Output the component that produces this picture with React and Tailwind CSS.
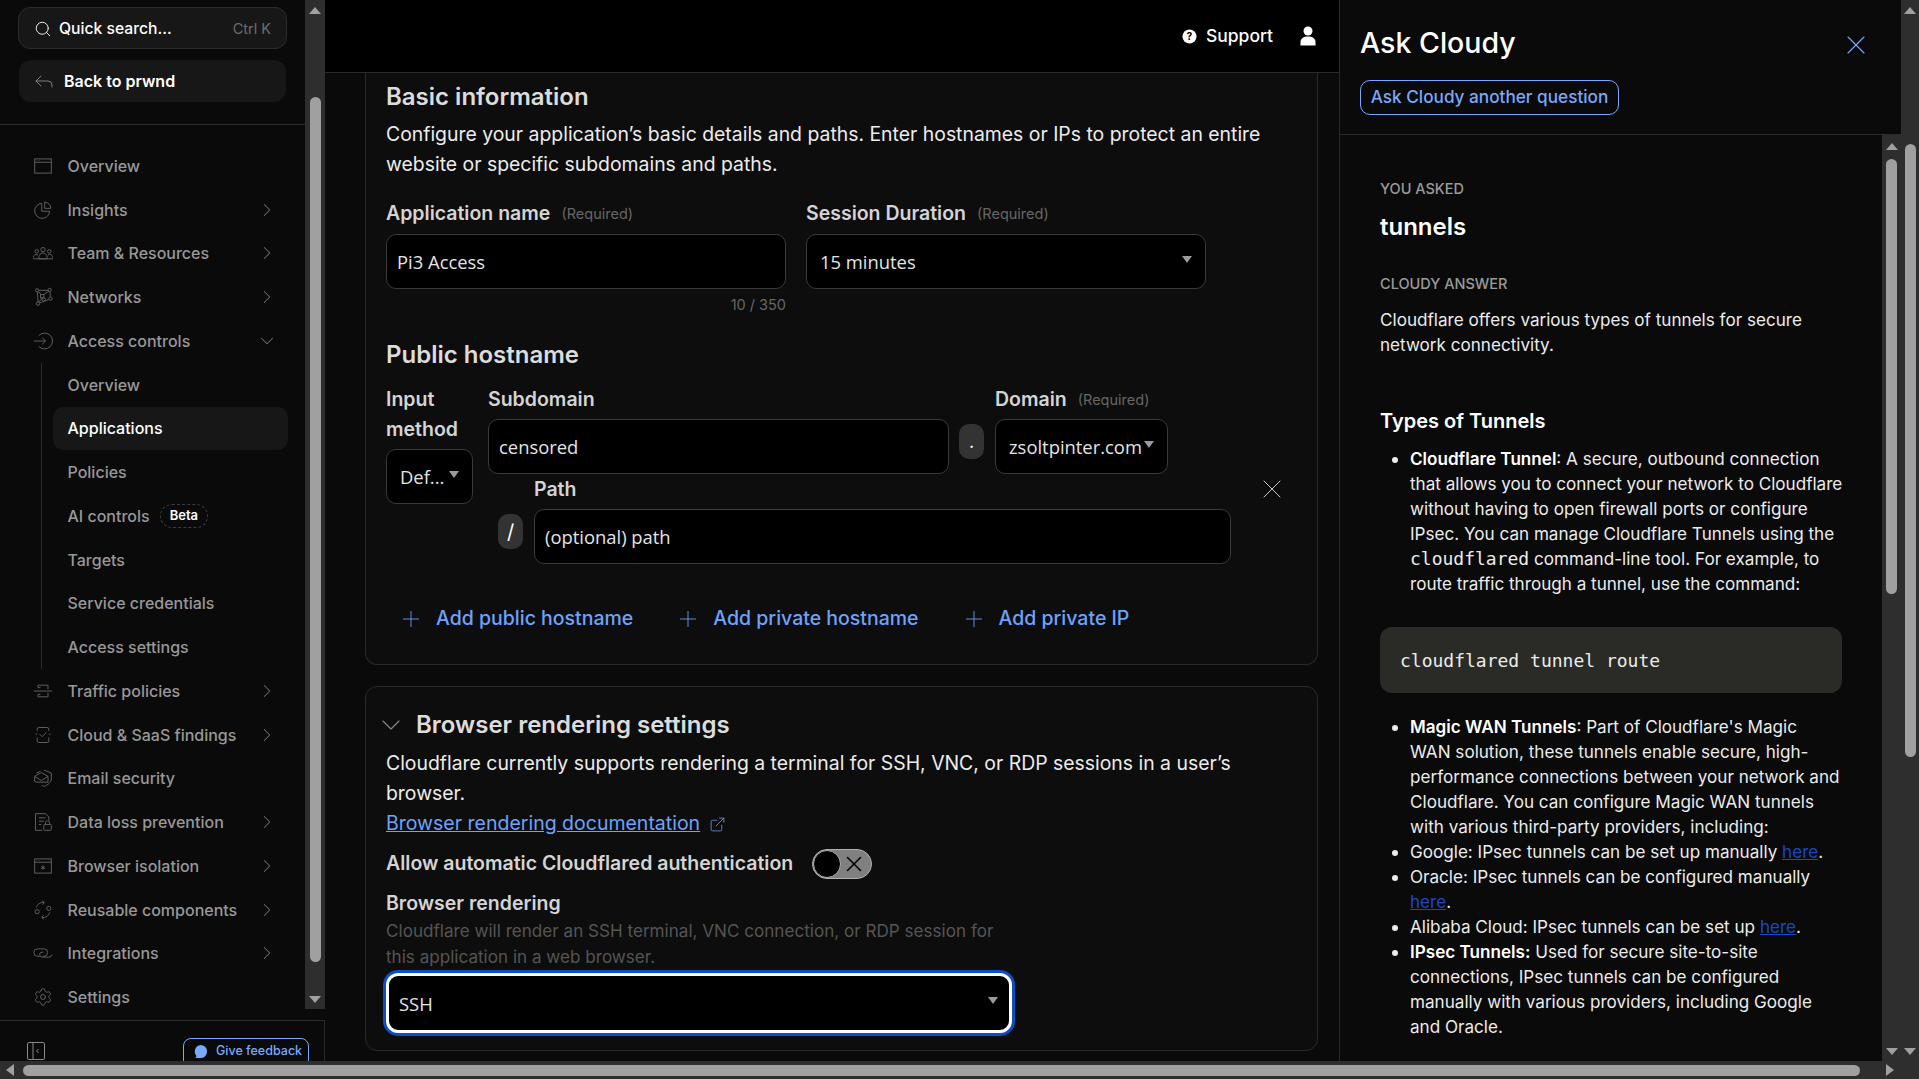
import React from "react";
import { ChevronDown, ChevronRight, Plus, Search, X, Settings, Reply, ExternalLink } from "lucide-react";

const Icon = ({ children }) => (
  <svg width="20" height="20" viewBox="0 0 24 24" fill="none" stroke="currentColor" strokeWidth="1.2" className="shrink-0">
    {children}
  </svg>
);

const icons = {
  overview: <Icon><rect x="2" y="3.5" width="20" height="17" /><path d="M2 7.5h20M4 5.5h.5M6 5.5h.5M8 5.5h.5" /></Icon>,
  insights: <Icon><path d="M10.5 4a9 9 0 1 0 9.5 9.5h-9.5z" /><path d="M14 2.5a8 8 0 0 1 7.5 7.5H14z" /></Icon>,
  team: <Icon><circle cx="12" cy="8" r="2.6" /><circle cx="4.5" cy="10" r="2.1" /><circle cx="19.5" cy="10" r="2.1" /><path d="M7 19v-2a5 5 0 0 1 10 0v2zM0 19v-1.5a4 4 0 0 1 6-3.2M24 19v-1.5a4 4 0 0 0-6-3.2M0 19h24" /></Icon>,
  networks: <Icon><circle cx="5" cy="4" r="2" /><circle cx="20" cy="3.5" r="2" /><circle cx="21" cy="14" r="2" /><circle cx="6" cy="20" r="2" /><circle cx="13" cy="15" r="2" /><rect x="9" y="9" width="4" height="4" /><path d="M7 4h11M5.3 6 6 18M8 19l11-4M20.3 5.5l.5 6.5M6.5 5.5l3 3.5M19 5l-6 4M11.5 13l-5 5.5" /></Icon>,
  access: <Icon><path d="M1 12h14M11 8l4 4-4 4M7 5.5a9.5 9.5 0 1 1 0 13" /></Icon>,
  traffic: <Icon><path d="M6 8V5h12v5M1 12h22M6 16v3h12v-5M6 8h3M6 16h3" /></Icon>,
  cloud: <Icon><path d="M5 7V5a2 2 0 0 1 2-2h10a2 2 0 0 1 2 2v2M5 15v4a2 2 0 0 0 2 2h10a2 2 0 0 0 2-2v-4M3 11h2M19 11h2M8 11l3 3 5-5" /></Icon>,
  email: <Icon><path d="M13 2.5 22 6v7c0 4-4 7.500-9 9l-2.500-1M4 6l5-2" /><path d="m2 10 8-4.500 8 4.500v7H4l-2-1zM2 10l8 5 8-5" /></Icon>,
  dlp: <Icon><path d="M11 22H3V2h12l4 4v4M7 7h8M7 11h6M7 15h3" /><rect x="13" y="15" width="9" height="7" rx="1" /><path d="M15 15v-2a2.500 2.500 0 0 1 5 0v2" /></Icon>,
  browser: <Icon><rect x="2" y="3.500" width="20" height="17" /><path d="M2 7.500h20M4 5.500h.5M6 5.500h.5M8 5.500h.5M12 11.500v5M9.800 12.800l4.400 2.400M14.200 12.800l-4.400 2.400" /></Icon>,
  reusable: <Icon><circle cx="5" cy="14" r="2.500" /><circle cx="19" cy="10" r="2.500" /><path d="M4 9a8 8 0 0 1 9-6M11 1l2.500 2-2 2.500M20 15a8 8 0 0 1-9 6M13 23l-2.500-2 2-2.500" /></Icon>,
  integrations: <Icon><path d="M8 16H5.500a4.500 4.500 0 0 1 0-9H13a4.500 4.500 0 0 1 0 9h-1.500" /><path d="M12.500 11H11a3 3 0 0 0 0 6h8a4 4 0 0 0 4-3" /></Icon>,
  settings: <Settings size={20} strokeWidth={1.2} className="shrink-0" />,
};

const NavItem = ({ icon, label, chevron, open }) => (
  <div className="flex h-[43.75px] items-center text-[16px] font-medium text-[#989898]">
    <div className="flex w-[67.5px] justify-end pr-[14.5px] text-[#5e5e5e]">{icons[icon]}</div>
    <span className="flex-1">{label}</span>
    {chevron && (
      <span className="pr-[27px] text-[#707070]">
        {open ? <ChevronDown size={22} strokeWidth={1.1} /> : <ChevronRight size={22} strokeWidth={1.1} />}
      </span>
    )}
  </div>
);

const SubItem = ({ children, active }) => (
  <div className={`mr-[17px] flex h-[43.75px] items-center gap-[10px] rounded-[10px] pl-[14.5px] text-[16px] font-medium ${active ? "bg-[#171717] text-white" : "text-[#989898]"}`}>
    {children}
  </div>
);

const ScrollArrow = ({ dir }) => {
  const cls = {
    up: "border-x-[6px] border-b-[7px] border-x-transparent border-b-[#a0a0a0]",
    down: "border-x-[6px] border-t-[7px] border-x-transparent border-t-[#a0a0a0]",
    left: "border-y-[6px] border-r-[8px] border-y-transparent border-r-[#a0a0a0]",
    right: "border-y-[6px] border-l-[8px] border-y-transparent border-l-[#a0a0a0]",
  };
  return <div className={`h-0 w-0 ${cls[dir]}`} />;
};

const Caret = () => <div className="h-0 w-0 border-x-[5px] border-t-[7px] border-x-transparent border-t-[#9a9a9a]" />;

const Label = ({ children, required, className = "" }) => (
  <div className={`flex items-center gap-[11px] pt-[2px] text-[19.5px] font-semibold text-[#d4d4d4] ${className}`}>
    {children}
    {required && <span className="text-[14.5px] font-normal text-[#666]">(Required)</span>}
  </div>
);

const Field = ({ children, className = "" }) => (
  <div className={`flex h-[55px] items-center rounded-[10px] border border-[#3a3a3a] bg-black pt-[1px] text-[18.4px] text-[#e4e4e4] [font-family:'Open_Sans',sans-serif] ${className}`}>
    {children}
  </div>
);

const AddLink = ({ children }) => (
  <div className="flex items-center gap-[12px] text-[19.5px] font-medium text-[#6ea2fb]">
    <Plus size={26} strokeWidth={0.8} />
    {children}
  </div>
);

const Here = () => <a className="text-[#1a47c8] underline">here</a>;

const Code = ({ children }) => <code className="text-[18px] [font-family:'DejaVu_Sans_Mono',monospace]">{children}</code>;

export default function App() {
  return (
    <div className="flex h-[1079px] flex-col overflow-hidden bg-[#0a0a0a] text-white [font-family:Inter,sans-serif]">
      <div className="flex h-[1061px] min-h-0">
        {/* sidebar */}
        <aside className="flex w-[325px] shrink-0 flex-col">
          <div className="flex h-[1009px]">
            <div className="w-[305px]">
              <div className="mt-[7px] ml-[18px] flex h-[42px] w-[269px] items-center rounded-[12px] border border-[#2c2c2c] bg-[#171717] pt-[1px] pr-[15px] pl-[14.5px] text-[15.7px] font-medium">
                <Search size={18} strokeWidth={1.2} className="mr-[7.5px]" />
                <span className="flex-1">Quick search...</span>
                <span className="text-[14.5px] font-normal text-[#6d6d6d]">Ctrl K</span>
              </div>
              <div className="mt-[11px] ml-[19px] flex h-[42px] w-[267px] items-center rounded-[12px] bg-[#171717] pl-[13px] text-[16px] font-semibold">
                <Reply size={24} strokeWidth={0.9} className="mr-[8px] text-[#8a8a8a]" />
                Back to prwnd
              </div>
              <div className="mt-[22px] border-t border-[#2a2a2a]" />
              <nav className="mt-[19px]">
                <NavItem icon="overview" label="Overview" />
                <NavItem icon="insights" label="Insights" chevron />
                <NavItem icon="team" label="Team & Resources" chevron />
                <NavItem icon="networks" label="Networks" chevron />
                <NavItem icon="access" label="Access controls" chevron open />
                <div className="ml-[41px] border-l border-[#2c2c2c] pl-[11px]">
                  <SubItem>Overview</SubItem>
                  <SubItem active>Applications</SubItem>
                  <SubItem>Policies</SubItem>
                  <SubItem>
                    AI controls
                    <span className="rounded-full border border-dashed border-[#3c3c3c] px-[9px] py-[1px] text-[13px] font-semibold text-white">Beta</span>
                  </SubItem>
                  <SubItem>Targets</SubItem>
                  <SubItem>Service credentials</SubItem>
                  <SubItem>Access settings</SubItem>
                </div>
                <NavItem icon="traffic" label="Traffic policies" chevron />
                <NavItem icon="cloud" label="Cloud & SaaS findings" chevron />
                <NavItem icon="email" label="Email security" />
                <NavItem icon="dlp" label="Data loss prevention" chevron />
                <NavItem icon="browser" label="Browser isolation" chevron />
                <NavItem icon="reusable" label="Reusable components" chevron />
                <NavItem icon="integrations" label="Integrations" chevron />
                <NavItem icon="settings" label="Settings" />
              </nav>
            </div>
            {/* sidebar scrollbar */}
            <div className="flex w-[20px] flex-col items-center bg-[#2e2e2e] pt-[7px] pb-[6px]">
              <ScrollArrow dir="up" />
              <div className="mt-[83px] h-[865px] w-[11px] rounded-full bg-[#a0a0a0]" />
              <div className="flex-1" />
              <ScrollArrow dir="down" />
            </div>
          </div>
          <div className="mt-[11px] flex flex-1 items-start justify-between border-t border-r border-[#2a2a2a] pt-[17px] pr-[15px] pl-[27px]">
            <svg width="18" height="18" viewBox="0 0 18 18" fill="none" stroke="#8a8a8a" className="mt-[4px]">
              <rect x="0.5" y="0.5" width="17" height="17" rx="1.5" />
              <path d="M6 1v16M11.5 7 9.500 9l2 2" />
            </svg>
            <div className="flex h-[30px] w-[126px] items-center gap-[8px] rounded-[8px] border border-[#78a9ff] pb-[4px] pl-[9px] text-[12.5px] font-medium text-[#78a9ff]">
              <svg width="15" height="15" viewBox="0 0 16 16" fill="#78a9ff"><path d="M8 1a7 7 0 0 1 0 14H2.500l1.300-2.300A7 7 0 0 1 8 1z" /></svg>
              Give feedback
            </div>
          </div>
        </aside>

        {/* main column */}
        <main className="flex w-[1014px] shrink-0 flex-col bg-[#0a0a0a]">
          <header className="flex h-[73px] shrink-0 items-center justify-end gap-[10px] border-b border-[#2a2a2a] bg-black pr-[23px] text-[17.5px] font-medium">
            <svg width="15" height="15" viewBox="0 0 16 16" className="mr-[-1px]">
              <circle cx="8" cy="8" r="7.5" fill="#fff" />
              <text x="8" y="12" textAnchor="middle" fontSize="11" fontWeight="700" fill="#000">?</text>
            </svg>
            <span className="mr-[17px]">Support</span>
            <svg width="16" height="20" viewBox="0 0 16 20" fill="#fff">
              <circle cx="8" cy="5" r="4.5" />
              <path d="M0.500 19.500v-3.500c0-3.500 3-5.500 7.500-5.500s7.500 2 7.500 5.500v3.500z" />
            </svg>
          </header>
          <div className="flex-1 overflow-hidden pr-[21px] pl-[40px]">
            <section className="rounded-b-[12px] border-x border-b border-[#2a2a2a] bg-[#0d0d0d] px-[20px] pt-[8px] pb-[30px]">
              <h2 className="text-[24px] leading-[32px] font-semibold text-[#dcdcdc]">Basic information</h2>
              <p className="mt-[6px] text-[19.4px] leading-[30px] text-[#ececec]">
                Configure your application’s basic details and paths. Enter hostnames or IPs to protect an entire website or specific subdomains and paths.
              </p>
              <div className="mt-[22px] flex gap-[20px]">
                <div className="w-[400px]">
                  <Label required className="h-[24px]">Application name</Label>
                  <Field className="mt-[9px] pl-[10px]">Pi3 Access</Field>
                  <div className="mt-[6px] text-right text-[14.5px] leading-[20px] text-[#666]">10 / 350</div>
                </div>
                <div className="w-[400px]">
                  <Label required className="h-[24px]">Session Duration</Label>
                  <Field className="mt-[9px] justify-between pr-[13px] pl-[13px]">
                    15 minutes
                    <span className="mb-[6px]"><Caret /></span>
                  </Field>
                </div>
              </div>
              <h2 className="mt-[24px] text-[24px] leading-[32px] font-semibold text-[#dcdcdc]">Public hostname</h2>
              <div className="mt-[13px] flex">
                <div className="w-[87px]">
                  <div className="text-[19.5px] leading-[30px] font-semibold text-[#d4d4d4]">Input method</div>
                  <Field className="mt-[5px] gap-[5px] pl-[13px]">
                    Def...
                    <span className="mb-[6px]"><Caret /></span>
                  </Field>
                </div>
                <div className="ml-[15px] flex-1">
                  <div className="flex">
                    <div className="w-[461px]">
                      <Label className="h-[30px]">Subdomain</Label>
                      <Field className="mt-[5px] pl-[10px]">censored</Field>
                    </div>
                    <div className="mt-[40px] ml-[10px] flex h-[35px] w-[25px] items-center justify-center rounded-[10px] bg-[#333] text-[18px]">.</div>
                    <div className="ml-[11px] w-[173px]">
                      <Label required className="h-[30px]">Domain</Label>
                      <Field className="mt-[5px] gap-[2px] pl-[13px]">
                        zsoltpinter.com
                        <span className="mb-[6px]"><Caret /></span>
                      </Field>
                    </div>
                  </div>
                  <div className="flex">
                    <div className="mt-[40px] ml-[10px] flex h-[35px] w-[25px] items-center justify-center rounded-[10px] bg-[#333] text-[20px]">/</div>
                    <div className="ml-[11px] w-[697px]">
                      <Label className="h-[30px]">Path</Label>
                      <Field className="mt-[5px] pl-[10px] text-[#999]">(optional) path</Field>
                    </div>
                    <X size={32} strokeWidth={0.7} className="-mt-px ml-[25px] text-[#d8d8d8]" />
                  </div>
                </div>
              </div>
              <div className="mt-[40px] flex h-[30px] items-center gap-[42px] pl-[12px]">
                <AddLink>Add public hostname</AddLink>
                <AddLink>Add private hostname</AddLink>
                <AddLink>Add private IP</AddLink>
              </div>
            </section>

            <section className="mt-[21px] rounded-[12px] border border-[#2a2a2a] bg-[#0d0d0d] px-[20px] pt-[20px] pb-[17px]">
              <div className="-ml-[11px] flex h-[36px] items-center gap-[9px]">
                <ChevronDown size={32} strokeWidth={0.8} className="text-[#8a8a8a]" />
                <h2 className="text-[24px] font-semibold text-[#dcdcdc]">Browser rendering settings</h2>
              </div>
              <p className="mt-[5px] text-[19.4px] leading-[30px] text-[#ececec]">
                Cloudflare currently supports rendering a terminal for SSH, VNC, or RDP sessions in a user’s browser.
              </p>
              <div className="mt-[1px] flex h-[30px] items-center gap-[9px] text-[19.5px] text-[#6ea2fb]">
                <a className="underline">Browser rendering documentation</a>
                <ExternalLink size={17} strokeWidth={1.1} />
              </div>
              <div className="mt-[10px] flex h-[30px] items-center gap-[19px] text-[19.5px] font-semibold text-[#d4d4d4]">
                Allow automatic Cloudflared authentication
                <div className="flex h-[30px] w-[60px] items-center rounded-full border border-[#b0b0b0] bg-[#808080]">
                  <div className="h-[28px] w-[28px] rounded-full border border-[#b0b0b0] bg-black" />
                  <X size={26} strokeWidth={1.4} className="text-black" />
                </div>
              </div>
              <Label className="mt-[12px] h-[24px]">Browser rendering</Label>
              <p className="mt-[3px] w-[640px] text-[17.1px] leading-[26px] text-[#555]">
                Cloudflare will render an SSH terminal, VNC connection, or RDP session for this application in a web browser.
              </p>
              <div className="mt-[3px] flex h-[60px] w-[626px] items-center justify-between rounded-[12px] border-[3px] border-white bg-black pt-[1px] pr-[11px] pl-[10px] text-[18.4px] text-[#e4e4e4] ring-[3px] ring-[#0b4fc4] [font-family:'Open_Sans',sans-serif]">
                SSH
                <span className="mb-[6px]"><Caret /></span>
              </div>
            </section>
          </div>
        </main>

        {/* Ask Cloudy panel */}
        <div className="flex w-[562px] shrink-0 flex-col border-l border-[#2a2a2a]">
          <div className="relative h-[135px] shrink-0 border-b border-[#2a2a2a] pl-[20px]">
            <h1 className="pt-[22px] text-[28.5px] leading-[42px] font-medium">Ask Cloudy</h1>
            <div className="mt-[16px] flex h-[35px] w-[259px] items-center justify-center rounded-[10px] border border-[#78a9ff] pb-[2px] text-[17.2px] font-medium text-[#78a9ff]">
              Ask Cloudy another question
            </div>
            <X size={32} strokeWidth={0.8} className="absolute top-[29px] left-[500px] text-[#78a9ff]" />
          </div>
          <div className="flex min-h-0 flex-1">
            <div className="w-[542px] overflow-hidden pr-[38px] pl-[40px] text-[17.1px] leading-[25px] text-[#ececec]">
              <div className="mt-[43px] text-[14.5px] leading-[22px] font-medium text-[#9a9a9a]">YOU ASKED</div>
              <div className="mt-[11px] text-[24px] leading-[32px] font-semibold text-white">tunnels</div>
              <div className="mt-[30px] text-[14.5px] leading-[22px] font-medium text-[#9a9a9a]">CLOUDY ANSWER</div>
              <p className="mt-[12px]">Cloudflare offers various types of tunnels for secure network connectivity.</p>
              <h3 className="mt-[49px] text-[20px] leading-[30px] font-semibold text-white">Types of Tunnels</h3>
              <ul className="mt-[10px] list-disc pl-[30px]">
                <li>
                  <b className="font-semibold text-white">Cloudflare Tunnel</b>: A secure, outbound connection that allows you to connect your network to Cloudflare without having to open firewall ports or configure IPsec. You can manage Cloudflare Tunnels using the <Code>cloudflared</Code> command-line tool. For example, to route traffic through a tunnel, use the command:
                </li>
              </ul>
              <div className="mt-[31px] flex h-[66px] w-[462px] items-center rounded-[12px] bg-[#2a2b26] pl-[20px]">
                <Code>cloudflared tunnel route</Code>
              </div>
              <ul className="mt-[21px] list-disc pr-[2px] pl-[30px]">
                <li><b className="font-semibold text-white">Magic WAN Tunnels</b>: Part of Cloudflare's Magic WAN solution, these tunnels enable secure, high-performance connections between your network and Cloudflare. You can configure Magic WAN tunnels with various third-party providers, including:</li>
                <li>Google: IPsec tunnels can be set up manually <Here />.</li>
                <li>Oracle: IPsec tunnels can be configured manually <Here />.</li>
                <li>Alibaba Cloud: IPsec tunnels can be set up <Here />.</li>
                <li><b className="font-semibold text-white">IPsec Tunnels:</b> Used for secure site-to-site connections, IPsec tunnels can be configured manually with various providers, including Google and Oracle.</li>
              </ul>
            </div>
            <div className="flex w-[19px] flex-col items-center bg-[#2e2e2e] pt-[8px] pb-[6px]">
              <ScrollArrow dir="up" />
              <div className="mt-[9px] h-[435px] w-[11px] rounded-full bg-[#a0a0a0]" />
              <div className="flex-1" />
              <ScrollArrow dir="down" />
            </div>
          </div>
        </div>

        {/* page scrollbar */}
        <div className="flex w-[18px] shrink-0 flex-col items-center bg-[#2e2e2e] pt-[7px] pb-[6px]">
          <ScrollArrow dir="up" />
          <div className="mt-[130px] h-[613px] w-[11px] rounded-full bg-[#a0a0a0]" />
          <div className="flex-1" />
          <ScrollArrow dir="down" />
        </div>
      </div>

      {/* horizontal scrollbar */}
      <div className="flex h-[18px] shrink-0 items-center bg-[#2e2e2e] pl-[6px]">
        <ScrollArrow dir="left" />
        <div className="ml-[9px] h-[11px] w-[1837px] rounded-full bg-[#a0a0a0]" />
        <div className="ml-[26px]"><ScrollArrow dir="right" /></div>
      </div>
    </div>
  );
}
